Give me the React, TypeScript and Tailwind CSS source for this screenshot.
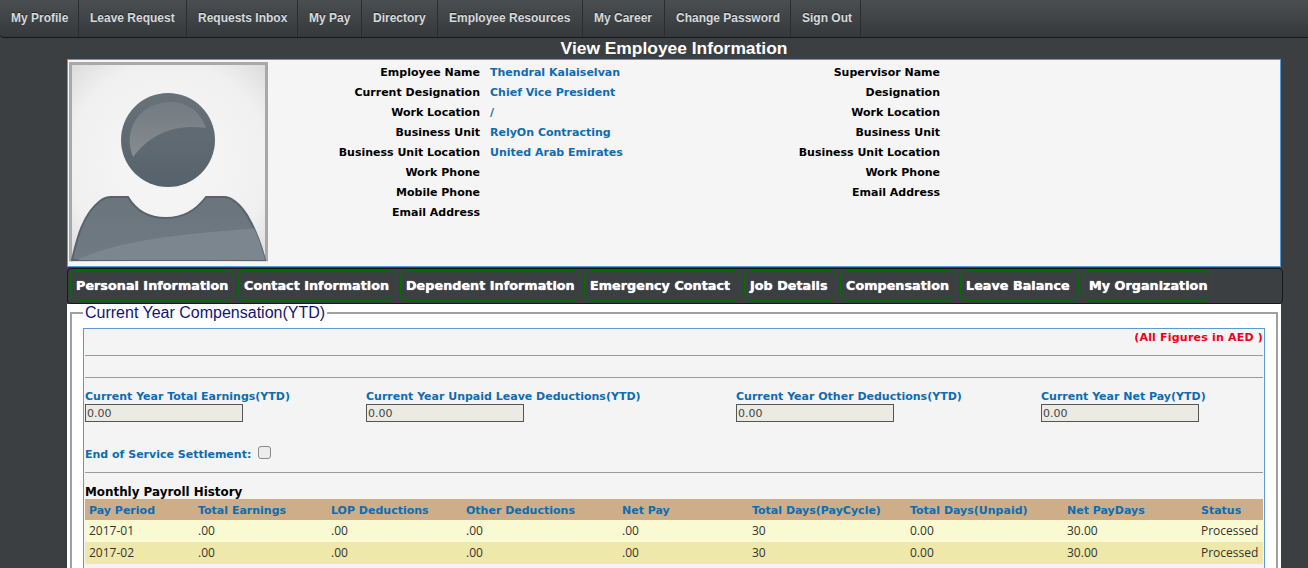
const navItems: [string, string][] = [["My Profile","w-[79px]"],["Leave Request","w-[108px]"],["Requests Inbox","w-[111px]"],["My Pay","w-[64px]"],["Directory","w-[76px]"],["Employee Resources","w-[145px]"],["My Career","w-[82px]"],["Change Password","w-[126px]"],["Sign Out","w-[70px]"]];
const tabs: [string, string][] = [["Personal Information","w-[164px]"],["Contact Information","w-[158px]"],["Dependent Information","w-[180px]"],["Emergency Contact","w-[156px]"],["Job Details","w-[92px]"],["Compensation","w-[116px]"],["Leave Balance","w-[119px]"],["My Organization","w-[129px]"]];
const left: [string,string][] = [["Employee Name","Thendral Kalaiselvan"],["Current Designation","Chief Vice President"],["Work Location","/"],["Business Unit","RelyOn Contracting"],["Business Unit Location","United Arab Emirates"],["Work Phone",""],["Mobile Phone",""],["Email Address",""]];
const right = ["Supervisor Name","Designation","Work Location","Business Unit","Business Unit Location","Work Phone","Email Address"];
const ytd: [string, string][] = [["Current Year Total Earnings(YTD)","w-[281px]"],["Current Year Unpaid Leave Deductions(YTD)","w-[370px]"],["Current Year Other Deductions(YTD)","w-[305px]"],["Current Year Net Pay(YTD)","w-[222px]"]];
const cols = ["w-[109px]","w-[133px]","w-[135px]","w-[156px]","w-[130px]","w-[158px]","w-[157px]","w-[134px]","w-[62px]"];
const heads = ["Pay Period","Total Earnings","LOP Deductions","Other Deductions","Net Pay","Total Days(PayCycle)","Total Days(Unpaid)","Net PayDays","Status"];
const rows = [
  ["2017-01",".00",".00",".00",".00","30","0.00","30.00","Processed"],
  ["2017-02",".00",".00",".00",".00","30","0.00","30.00","Processed"],
];
const verdana = "font-['DejaVu_Sans',sans-serif]";
const body = "M3 198 C8 176 14 152 31 139 C35 136 39 135 42 135 L59 135 C66 147 78 156 97 156 C116 156 128 147 137 135 L156 135 C165 136 172 144 178 153 C187 168 192 182 196 198 Z";

function Avatar() {
  return (
    <svg width="199" height="200" viewBox="0 0 199 200" className="block shrink-0">
      <defs>
        <radialGradient id="bg" cx="50%" cy="50%" r="72%">
          <stop offset="0%" stopColor="#f7f7f7" />
          <stop offset="70%" stopColor="#f0f0f0" />
          <stop offset="100%" stopColor="#d8d8d8" />
        </radialGradient>
        <linearGradient id="head" x1="0" y1="0" x2="0" y2="1">
          <stop offset="0%" stopColor="#687179" />
          <stop offset="100%" stopColor="#56626b" />
        </linearGradient>
        <linearGradient id="shine" x1="0" y1="0" x2="0" y2="1">
          <stop offset="0%" stopColor="#737b82" />
          <stop offset="100%" stopColor="#858c92" />
        </linearGradient>
        <linearGradient id="bodyFill" x1="0" y1="0" x2="0" y2="1">
          <stop offset="0%" stopColor="#6a747c" />
          <stop offset="100%" stopColor="#6f7b84" />
        </linearGradient>
        <clipPath id="bodyClip"><path d={body} /></clipPath>
        <filter id="soft"><feGaussianBlur stdDeviation="0.6" /></filter>
      </defs>
      <rect x="0" y="0" width="199" height="200" fill="url(#bg)" />
      <rect x="1.5" y="1.5" width="196" height="196" fill="none" stroke="#a8a8a8" strokeWidth="3" filter="url(#soft)" />
      <g filter="url(#soft)">
        <circle cx="99" cy="78" r="47" fill="url(#head)" />
        <path d="M64 95 C54 70 68 42 99 40 C118 39 132 50 137 66 C112 62 84 68 64 95 Z" fill="url(#shine)" />
        <path d={body} fill="url(#bodyFill)" stroke="#5a646d" strokeWidth="2" />
        <g clipPath="url(#bodyClip)">
          <path d="M8 198 C50 178 110 172 192 166 L199 198 Z" fill="#7b868f" />
        </g>
      </g>
    </svg>
  );
}

export default function App() {
  return (
    <div className="h-[568px] overflow-hidden bg-[#3b3f42] font-['Liberation_Sans',sans-serif]">
      <nav className="flex h-[38px] border-b border-[#16181a] rounded-bl-[4px] bg-gradient-to-b from-[#4b4e50] to-[#36393b]">
        {navItems.map(([n, w]) => (
          <div key={n} className={`flex h-[37px] items-center whitespace-nowrap border-r border-[#2a2c2e] pb-[2px] pl-[11px] text-[12px] font-bold text-[#d5dadd] [text-shadow:0_-1px_0_#222] ${w}`}>
            {n}
          </div>
        ))}
      </nav>
      <h1 className="h-[21px] pl-[40px] text-center text-[17.4px] leading-[21px] font-bold text-white">View Employee Information</h1>
      <div className="ml-[67px] w-[1216px]">
        <section className={`flex h-[208px] w-[1214px] border border-[#5b9bd5] bg-[#f5f5f5] pl-[1px] pt-[2px] text-[11px] font-bold ${verdana}`}>
          <Avatar />
          <div className="w-[212px] shrink-0 pt-[2px]">
            {left.map(([l]) => <div key={l} className="h-[20px] text-right leading-[18px] text-black">{l}</div>)}
          </div>
          <div className="ml-[10px] w-[250px] shrink-0 pt-[2px]">
            {left.map(([l, v]) => <div key={l} className="h-[20px] leading-[18px] text-[#0f6cb0]">{v}</div>)}
          </div>
          <div className="w-[200px] shrink-0 pt-[2px]">
            {right.map((l) => <div key={l} className="h-[20px] text-right leading-[18px] text-black">{l}</div>)}
          </div>
        </section>
        <div className="mt-[1px] flex h-[36px] gap-[4px] rounded-[4px] border border-[#16181a] bg-[#3b3f42] pl-[2px] pt-[1px]">
          {tabs.map(([t, w]) => (
            <div key={t} className={`flex h-[31px] items-center whitespace-nowrap rounded-[7px] border border-[#007000] pl-[5px] pt-[1px] text-[12.8px] font-bold text-white [text-shadow:0_0_1px_#fff] ${w} ${verdana}`}>
              {t}
            </div>
          ))}
        </div>
        <main className="h-[400px] w-[1214px] bg-white px-[3px]">
          <fieldset className="min-w-0 border-2 border-[#a0a0a0] px-[11px]">
            <legend className="px-[2px] text-[16px] leading-[18px] text-[#14146e]">Current Year Compensation(YTD)</legend>
            <div className={`mt-[6px] border border-[#5b9bd5] bg-[#f4f4f4] px-[1px] text-[11px] ${verdana}`}>
              <p className="h-[26px] pt-[1px] text-right font-bold leading-[15px] tracking-[0.2px] text-[#f00018]">(All Figures in AED )</p>
              <hr className="border-t border-[#9a9a9a]" />
              <hr className="mt-[21px] border-t border-[#9a9a9a]" />
              <div className="mt-[12px] flex">
                {ytd.map(([l, w]) => (
                  <div key={l} className={w}>
                    <div className="h-[14px] font-bold leading-[14px] text-[#0f6cb0]">{l}</div>
                    <div className="h-[18px] w-[158px] border border-[#555] bg-[#ebebe4] pl-[1px] text-[11px] leading-[17px] text-[#444]">0.00</div>
                  </div>
                ))}
              </div>
              <div className="mt-[21px] flex h-[20px] items-center font-bold text-[#0f6cb0]">
                <span className="relative top-[2px]">End of Service Settlement:</span>
                <input type="checkbox" readOnly className="ml-[7px] h-[13px] w-[13px] -translate-y-[1px] appearance-none rounded-[3px] border border-[#8a8a8a] bg-[#ececec]" />
              </div>
              <hr className="mt-[9px] border-t border-[#9a9a9a]" />
              <div className="mt-[12px] h-[14px] text-[11.9px] font-bold leading-[15px] text-black">Monthly Payroll History</div>
              <div className="flex h-[21px] items-center bg-[#cdae88] pl-[4px] pt-[3px] font-bold text-[#0f6cb0]">
                {heads.map((h, i) => <div key={h} className={cols[i]}>{h}</div>)}
              </div>
              {rows.map((r, idx) => (
                <div key={idx} className={`flex h-[22px] items-center pl-[4px] font-['Open_Sans',sans-serif] text-[12px] text-[#333] ${idx === 0 ? "bg-[#fafad2]" : "bg-[#eee8aa]"}`}>
                  {r.map((c, i) => <div key={i} className={cols[i]}>{c}</div>)}
                </div>
              ))}
              <div className="h-[20px]" />
            </div>
          </fieldset>
        </main>
      </div>
    </div>
  );
}
